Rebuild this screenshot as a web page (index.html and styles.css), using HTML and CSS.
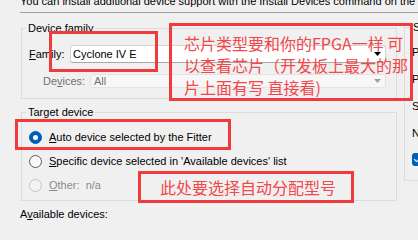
FILE: index.html
```html
<!DOCTYPE html>
<html lang="en">
<head>
<meta charset="utf-8">
<title>Device</title>
<link rel="stylesheet" href="styles.css">
</head>
<body>
<div class="page">
  <p class="intro">You can install additional device support with the Install Devices command on the Tools menu.</p>
  <div class="sep"></div>
  <div class="main">
    <div class="left">
      <fieldset class="group family">
        <legend>Device family</legend>
        <div class="row row-family">
          <span class="lbl"><u>F</u>amily:</span>
          <div class="combo combo-main">
            <span>Cyclone IV E</span>
            <svg class="arrow" width="7" height="4" viewBox="0 0 7 4"><polygon points="0,0 7,0 3.5,4" fill="#000"/></svg>
          </div>
        </div>
        <div class="row row-devices">
          <span class="lbl dis">De<u>v</u>ices:</span>
          <div class="combo combo-dis">
            <span>All</span>
            <svg class="arrow" width="7" height="4" viewBox="0 0 7 4"><polygon points="0,0 7,0 3.5,4" fill="#a0a0a0"/></svg>
          </div>
        </div>
      </fieldset>
      <fieldset class="group target">
        <legend>Target device</legend>
        <div class="opt"><span class="radio on"></span><span><u>A</u>uto device selected by the Fitter</span></div>
        <div class="opt"><span class="radio"></span><span><u>S</u>pecific device selected in 'Available devices' list</span></div>
        <div class="opt dis"><span class="radio off"></span><span><u>O</u>ther:&nbsp; n/a</span></div>
      </fieldset>
      <div class="avail">A<u>v</u>ailable devices:</div>
    </div>
    <fieldset class="group filters">
      <legend>Show in 'Available devices' list</legend>
      <div class="frow">Package:</div>
      <div class="frow">Pin count:</div>
      <div class="frow">Speed grade:</div>
      <div class="frow">Name filter:</div>
      <div class="frow"><span class="check"></span>Show advanced devices</div>
    </fieldset>
  </div>
  <div class="note note-1">芯片类型要和你的FPGA一样 可<br>以查看芯片（开发板上最大的那<br>片上面有写 直接看)</div>
  <div class="note note-2"></div>
  <div class="note note-3"></div>
  <div class="note note-4">此处要选择自动分配型号</div>
</div>
</body>
</html>
```
FILE: styles.css
```css
html, body {
  margin: 0;
  padding: 0;
}
body {
  width: 418px;
  height: 224px;
  overflow: hidden;
  background: #f0f0f0;
  font-family: "Segoe UI", "Liberation Sans", Arial, sans-serif;
  font-size: 11px;
  color: #000;
}
.page {
  position: relative;
  height: 224px;
  padding-left: 20px;
  overflow: hidden;
}
.intro {
  margin: -5px 0 0;
  height: 13px;
  line-height: 13px;
  white-space: nowrap;
}
.sep {
  margin-top: 4px;
  height: 1px;
  background: #a0a0a0;
}
.main {
  display: flex;
  align-items: flex-start;
  gap: 7px;
  width: max-content;
}
.left {
  flex: none;
  width: 377px;
}
.group {
  margin: 0;
  padding: 0;
  border: 1px solid #dcdcdc;
  min-width: 0;
}
.group legend {
  margin-left: 4px;
  padding: 0 2px;
  height: 13px;
  line-height: 13px;
  white-space: nowrap;
}
.family {
  margin: 9px 0 0 1px;
  padding: 10px 10px 10px 0;
}
.row {
  display: flex;
  align-items: center;
}
.row-family {
  padding-left: 7px;
  height: 18px;
}
.row-devices {
  margin-top: 11px;
  padding-left: 21px;
  height: 14px;
}
.row-family .lbl {
  width: 41px;
}
.row-devices .lbl {
  width: 47px;
}
.dis {
  color: #707070;
}
.combo {
  flex: 1;
  box-sizing: border-box;
  display: flex;
  align-items: center;
  justify-content: space-between;
  border-radius: 3px;
  padding: 0 4px 0 2px;
}
.combo-main {
  height: 18px;
  background: #fff;
  border: 1px solid #d3d3d3;
  border-bottom-color: #a8a8a8;
}
.combo-dis {
  height: 14px;
  background: #f7f7f7;
  border: 1px solid #e3e3e3;
  color: #707070;
  padding-left: 3px;
}
.arrow {
  display: block;
  margin-top: -1px;
}
.target {
  margin: 7px 0 0 1px;
  padding: 6px 0 3px 0;
}
.opt {
  display: flex;
  align-items: center;
  gap: 7px;
  height: 24px;
  padding-left: 7px;
  white-space: nowrap;
}
.opt.dis {
  height: 24px;
  color: #8a8a8a;
}
.radio {
  position: relative;
  flex: none;
  box-sizing: border-box;
  width: 13px;
  height: 13px;
  border-radius: 50%;
  border: 1px solid #5c5c5c;
  background: #f9f9f9;
}
.radio.on {
  background: #005fb8;
  border-color: #005fb8;
}
.radio.on::after {
  content: "";
  position: absolute;
  left: 3px;
  top: 3px;
  width: 5px;
  height: 5px;
  border-radius: 50%;
  background: #fff;
}
.radio.off {
  border-color: #c4c4c4;
  background: #f3f3f3;
}
.avail {
  margin-top: 7px;
  height: 13px;
  line-height: 13px;
}
.filters {
  flex: none;
  width: 220px;
  margin-top: 8px;
  padding: 4px 0 7px 0;
}
.filters legend {
  margin-left: 6px;
}
.frow {
  display: flex;
  align-items: center;
  gap: 6px;
  height: 27px;
  padding-left: 7px;
  white-space: nowrap;
}
.check {
  position: relative;
  flex: none;
  width: 13px;
  height: 13px;
  border-radius: 3px;
  background: #005fb8;
}
.check::after {
  content: "";
  position: absolute;
  left: 4px;
  top: 1px;
  width: 3px;
  height: 7px;
  border: solid #fff;
  border-width: 0 1.5px 1.5px 0;
  transform: rotate(45deg);
}
.note {
  position: absolute;
  box-sizing: border-box;
  border: 3px solid #ef3b3b;
  color: #f2474b;
  font-family: "Noto Sans CJK SC", "Microsoft YaHei", sans-serif;
  font-size: 16px;
  line-height: 22px;
  white-space: nowrap;
}
.note-1 {
  left: 169px;
  top: 23px;
  width: 244px;
  height: 78px;
  padding: 6px 0 0 12px;
}
.note-2 {
  left: 49px;
  top: 31px;
  width: 109px;
  height: 41px;
}
.note-3 {
  left: 15px;
  top: 119px;
  width: 216px;
  height: 31px;
}
.note-4 {
  left: 138px;
  top: 171px;
  width: 216px;
  height: 32px;
  padding-left: 19px;
  line-height: 26px;
}
```
